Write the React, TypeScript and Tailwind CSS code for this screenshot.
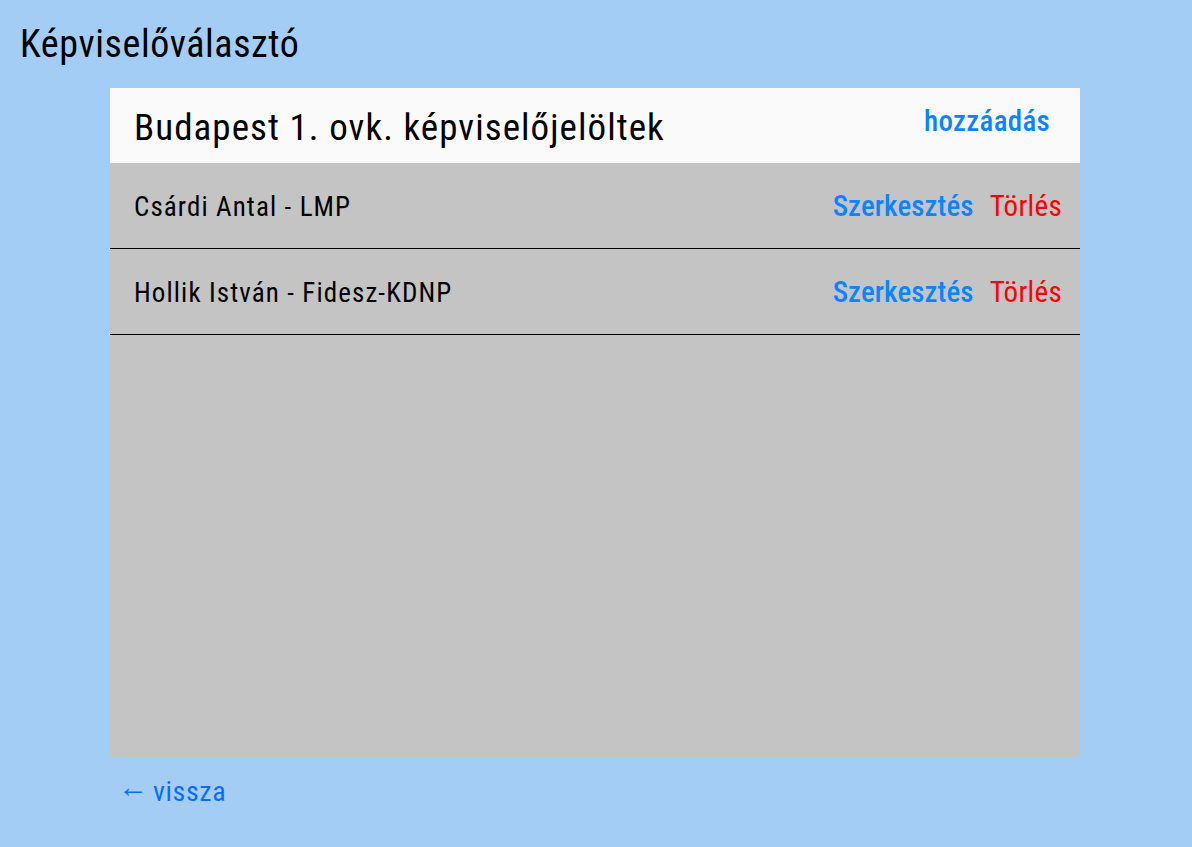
const candidates = [
  { name: "Csárdi Antal - LMP" },
  { name: "Hollik István - Fidesz-KDNP" },
];

export default function App() {
  return (
    <div className="min-h-screen bg-[#a4cdf5] font-['Roboto_Condensed',sans-serif] text-black">
      <h1 className="pl-5 pt-[20px] text-[38px] leading-[48px] tracking-[0.6px]">Képviselőválasztó</h1>
      <div className="ml-[110px] mt-[20px] flex h-[669px] w-[970px] flex-col bg-[#c4c4c4]">
        <div className="flex h-[75px] items-center justify-between bg-[#fafafa] pl-6 pr-[30px]">
          <h2 className="pt-1 text-[37px] tracking-[1.05px]">Budapest 1. ovk. képviselőjelöltek</h2>
          <button className="pb-2 text-[29px] font-medium tracking-[0.3px] text-[#0a84ff]">hozzáadás</button>
        </div>
        {candidates.map((c) => (
          <div
            key={c.name}
            className="flex h-[86px] items-center justify-between border-b border-black pl-6 pr-[18px]"
          >
            <span className="pt-1 text-[27px] tracking-[1.1px]">{c.name}</span>
            <div className="flex gap-4 pt-[3px] text-[29px]">
              <button className="font-medium tracking-[0.1px] text-[#0a84ff]">Szerkesztés</button>
              <button className="tracking-[0.3px] text-[#ff0000]">Törlés</button>
            </div>
          </div>
        ))}
      </div>
      <a href="#" className="ml-[118px] mt-[14px] inline-flex items-center gap-[5px] text-[28px] text-[#0a6cff]">
        <span className="pb-[10px] text-[30px] leading-none">←</span>
        <span className="tracking-[0.6px]">vissza</span>
      </a>
    </div>
  );
}
